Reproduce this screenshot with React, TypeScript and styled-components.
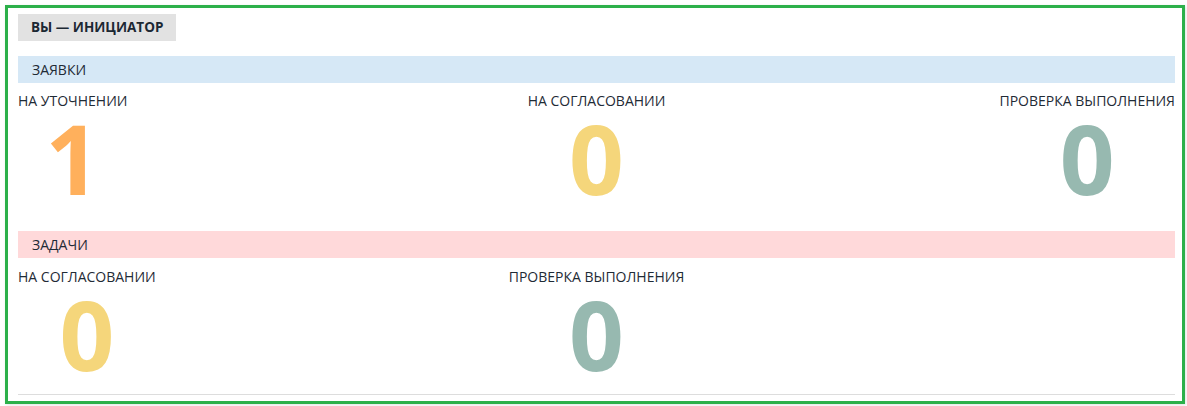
import React from "react";
import styled, { createGlobalStyle } from "styled-components";

const Global = createGlobalStyle`
  html, body { margin: 0; padding: 0; background: #ffffff; }
  body { font-family: "Open Sans", "Noto Sans", Arial, sans-serif; color: #1f2b36; }
`;

const Frame = styled.div`
  margin: 5px 2px 2px 5px;
  border: 3px solid #2cb04a;
  box-shadow: 1px 1px 3px rgba(0, 0, 0, 0.12);
  padding: 6px 7px 6px 10px;
  display: flex;
  flex-direction: column;
`;

const Badge = styled.div`
  align-self: flex-start;
  background: #e2e2e2;
  height: 27px;
  line-height: 27px;
  padding: 0 13px;
  font-size: 13.5px;
  font-weight: 700;
  color: #1c2833;
  margin-bottom: 15px;
`;

const Band = styled.div<{ $tone: "blue" | "pink" }>`
  height: 27px;
  line-height: 27px;
  padding-left: 14px;
  font-size: 14px;
  color: #1f2b36;
  background: ${(p) => (p.$tone === "blue" ? "#d6e8f6" : "#ffd9da")};
`;

const Grid = styled.div<{ $top: number; $bottom: number }>`
  display: grid;
  grid-template-columns: repeat(3, 1fr);
  padding-top: ${(p) => p.$top}px;
  padding-bottom: ${(p) => p.$bottom}px;
`;

const Stat = styled.div<{ $align: "start" | "center" | "end" }>`
  justify-self: ${(p) => p.$align};
  display: flex;
  flex-direction: column;
  align-items: center;
`;

const Label = styled.div`
  font-size: 14px;
  line-height: 18px;
  color: #1f2b36;
  white-space: nowrap;
`;

const Value = styled.div<{ $color: string }>`
  font-size: 96px;
  line-height: 96px;
  font-weight: 700;
  color: ${(p) => p.$color};
`;

const Rule = styled.div`
  height: 1px;
  background: #dddddd;
`;

const ORANGE = "#ffb05c";
const YELLOW = "#f5d67b";
const SAGE = "#97b9b0";

export default function App() {
  return (
    <>
      <Global />
      <Frame>
        <Badge>ВЫ — ИНИЦИАТОР</Badge>
        <Band $tone="blue">ЗАЯВКИ</Band>
        <Grid $top={9} $bottom={25}>
          <Stat $align="start">
            <Label>НА УТОЧНЕНИИ</Label>
            <Value $color={ORANGE}>1</Value>
          </Stat>
          <Stat $align="center">
            <Label>НА СОГЛАСОВАНИИ</Label>
            <Value $color={YELLOW}>0</Value>
          </Stat>
          <Stat $align="end">
            <Label>ПРОВЕРКА ВЫПОЛНЕНИЯ</Label>
            <Value $color={SAGE}>0</Value>
          </Stat>
        </Grid>
        <Band $tone="pink">ЗАДАЧИ</Band>
        <Grid $top={10} $bottom={12}>
          <Stat $align="start">
            <Label>НА СОГЛАСОВАНИИ</Label>
            <Value $color={YELLOW}>0</Value>
          </Stat>
          <Stat $align="center">
            <Label>ПРОВЕРКА ВЫПОЛНЕНИЯ</Label>
            <Value $color={SAGE}>0</Value>
          </Stat>
        </Grid>
        <Rule />
      </Frame>
    </>
  );
}
